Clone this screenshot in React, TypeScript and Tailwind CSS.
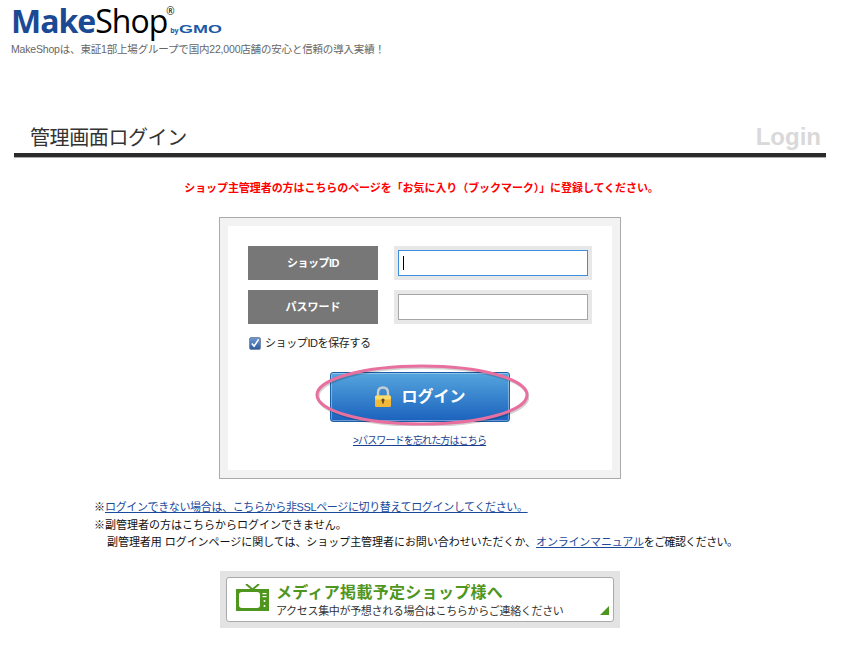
const App = () => {
  return (
    <div className="w-[843px] h-[662px] bg-white overflow-hidden font-['Liberation_Sans','Noto_Sans_CJK_JP',sans-serif] text-black">
      {/* header */}
      <div className="pl-[11px] h-[58px]">
        <div className="flex items-start h-[42px]">
          <span className="font-['Open_Sans',sans-serif] text-[32px] leading-[42px] font-bold text-[#1a4a94] tracking-[-1px]">Make</span>
          <span className="font-['Open_Sans',sans-serif] text-[32px] leading-[42px] tracking-[-1px]">Shop</span>
          <div className="flex flex-col">
            <span className="font-['Open_Sans',sans-serif] text-[10px] leading-[10px] mt-[6px] ml-[-1px]">®</span>
            <div className="flex items-baseline mt-[7px] ml-[3px]">
              <span className="font-['Open_Sans',sans-serif] text-[7px] leading-[12px] font-bold text-[#1a5aa8] tracking-[-0.3px]">by</span>
              <span className="text-[11px] leading-[12px] font-bold text-[#1a5aa8] scale-x-[1.63] origin-left ml-[1px]">GMO</span>
            </div>
          </div>
        </div>
        <p className="text-[10.5px] leading-[14px] text-[#666] tracking-[-0.18px]">MakeShopは、東証1部上場グループで国内22,000店舗の安心と信頼の導入実績！</p>
      </div>

      {/* title */}
      <div className="mx-[14px] mt-[67px] w-[812px] border-b border-[#aaa] h-[33px]">
        <div className="flex justify-between items-end h-[32px] border-b-4 border-[#2b2b2b] pb-[1px] mb-[1px]">
          <h1 className="ml-[16px] text-[20px] leading-[28px] text-[#333] tracking-[-0.4px]">管理画面ログイン</h1>
          <span className="mr-[5px] text-[24px] leading-[30px] font-bold text-[#d9d9d9]">Login</span>
        </div>
      </div>

      <p className="mt-[22px] text-center text-[11px] leading-[16px] font-bold text-[#f00] tracking-[-0.07px]">
        ショップ主管理者の方はこちらのページを「お気に入り（ブックマーク）」に登録してください。
      </p>

      {/* login box */}
      <div className="mt-[21px] ml-[219px] w-[402px] h-[262px] border border-[#aaa] bg-[#f2f2f2] p-[8px]">
        <div className="h-full bg-white pt-[20px] pl-[20px]">
          <div className="flex gap-[16px] h-[34px]">
            <div className="w-[130px] bg-[#777] flex items-center justify-center text-white text-[11px] font-bold tracking-[-0.5px]">ショップID</div>
            <div className="w-[198px] bg-[#e8e8e8] p-[4px]">
              <div className="h-full bg-white border border-[#3b8fdc] flex items-center pl-[4px]">
                <div className="w-[1px] h-[14px] bg-black"></div>
              </div>
            </div>
          </div>
          <div className="flex gap-[16px] h-[34px] mt-[10px]">
            <div className="w-[130px] bg-[#777] flex items-center justify-center text-white text-[11px] font-bold">パスワード</div>
            <div className="w-[198px] bg-[#e8e8e8] p-[4px]">
              <div className="h-full bg-white border border-[#a5a5a5]"></div>
            </div>
          </div>
          <div className="flex items-center gap-[4px] mt-[10px] ml-[1px] h-[18px]">
            <div className="w-[12px] h-[13px] rounded-[2px] border border-[#7a8ca8] bg-gradient-to-b from-[#6f97cc] to-[#2f5f9f] flex items-center justify-center">
              <svg width="11" height="11" viewBox="0 0 11 11">
                <path d="M2 5.5 L4.5 8.5 L9.5 1" fill="none" stroke="#fff" strokeWidth="1.8" />
              </svg>
            </div>
            <span className="text-[11px] leading-[18px] text-[#222] tracking-[-0.4px]">ショップIDを保存する</span>
          </div>

          {/* button */}
          <div className="relative mt-[20px] ml-[82px] w-[180px] h-[50px]">
            <div className="w-full h-full rounded-[3px] border border-[#1b5fa8] bg-gradient-to-b from-[#55a5dd] to-[#1c62bd] flex items-center justify-center gap-[9px] shadow-[inset_0_0_0_1px_rgba(255,255,255,0.35)]">
              <svg width="18" height="22" viewBox="0 0 18 22">
                <path d="M4 10 V6.5 C4 3 6 1.5 9 1.5 C12 1.5 14 3 14 6.5 V10" fill="none" stroke="#c9ced2" strokeWidth="2.4" />
                <rect x="1" y="9.5" width="16" height="11.5" rx="1.5" fill="#f0b93a" />
                <rect x="1" y="9.5" width="16" height="4" rx="1.5" fill="#fbdc6e" />
                <circle cx="9" cy="14" r="1.6" fill="#5c4a1c" />
                <rect x="8.2" y="14" width="1.6" height="3.5" fill="#5c4a1c" />
              </svg>
              <span className="text-white text-[16px] font-bold leading-[20px]">ログイン</span>
            </div>
            <svg className="absolute left-[-15px] top-[-8px]" width="214" height="62" viewBox="0 0 214 62">
              <ellipse cx="107" cy="31" rx="105" ry="29" fill="none" stroke="#000" strokeOpacity="0.18" strokeWidth="3" transform="translate(1 1.5)" />
              <ellipse cx="107" cy="31" rx="105" ry="29" fill="none" stroke="#e8709f" strokeWidth="3" />
            </svg>
          </div>

          <div className="mt-[5px] ml-[105px]">
            <a href="#" className="text-[10px] leading-[16px] text-[#1a3f8f] underline tracking-[-0.85px]">&gt;パスワードを忘れた方はこちら</a>
          </div>
        </div>
      </div>

      {/* notes */}
      <div className="mt-[20px] ml-[94px] text-[11px] leading-[17.5px] text-[#111]">
        <p>※<a href="#" className="text-[#1a4a9c] underline tracking-[-0.36px]">ログインできない場合は、こちらから非SSLページに切り替えてログインしてください。</a></p>
        <p>※副管理者の方はこちらからログインできません。</p>
        <p className="pl-[13px] tracking-[-0.05px]">副管理者用 ログインページに関しては、ショップ主管理者にお問い合わせいただくか、<a href="#" className="text-[#1a4a9c] underline tracking-[-0.2px]">オンラインマニュアル</a><span className="tracking-[-0.6px]">をご確認ください。</span></p>
      </div>

      {/* banner */}
      <div className="mt-[19px] ml-[220px] w-[400px] h-[57px] bg-[#e3e3e3] p-[6px]">
        <div className="relative h-full bg-white border border-[#aaa] rounded-[3px] flex items-center pl-[9px] gap-[7px]">
          <svg className="mb-[4px]" width="33" height="27" viewBox="0 0 33 27">
            <path d="M10 0 L16.5 5.5 L23 0" fill="none" stroke="#4f961e" strokeWidth="2" />
            <rect x="0" y="5" width="33" height="22" fill="#4f961e" />
            <rect x="3" y="8" width="21" height="16" rx="3" fill="#fff" />
            <rect x="26.5" y="9" width="4" height="1.2" fill="#fff" />
            <rect x="26.5" y="12" width="4" height="1.2" fill="#fff" />
            <circle cx="28.5" cy="17" r="1" fill="#fff" />
            <circle cx="28.5" cy="22" r="1" fill="#fff" />
          </svg>
          <div className="pt-[2px]">
            <p className="text-[16px] leading-[22px] font-bold text-[#4f961e] tracking-[0.3px]">メディア掲載予定ショップ様へ</p>
            <p className="text-[11px] leading-[14px] text-[#333] tracking-[-0.33px]">アクセス集中が予想される場合はこちらからご連絡ください</p>
          </div>
          <div className="absolute right-[4px] bottom-[6px] w-0 h-0 border-l-[9px] border-l-transparent border-b-[9px] border-b-[#4f961e]"></div>
        </div>
      </div>
    </div>
  );
};

export default App;
